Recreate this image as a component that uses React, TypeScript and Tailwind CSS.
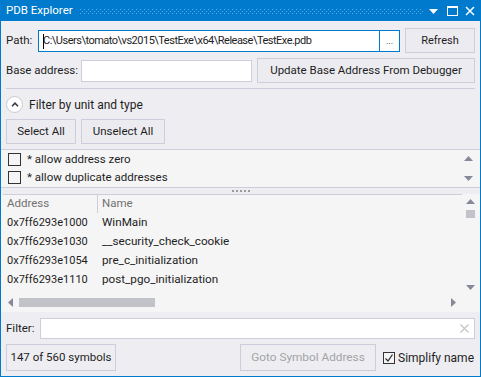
import React from "react";

const rows = [
  ["0x7ff6293e1000", "WinMain"],
  ["0x7ff6293e1030", "__security_check_cookie"],
  ["0x7ff6293e1054", "pre_c_initialization"],
  ["0x7ff6293e1110", "post_pgo_initialization"],
];

function Btn({ children, className = "" }: { children: React.ReactNode; className?: string }) {
  return (
    <div
      className={`flex items-center justify-center border border-[#cccedb] bg-[#ececf0] text-[#1e1e1e] ${className}`}
    >
      {children}
    </div>
  );
}

function TriUp({ color = "#868999" }: { color?: string }) {
  return (
    <svg width="9" height="5" viewBox="0 0 9 5">
      <path d="M0 5 L4.5 0 L9 5 Z" fill={color} />
    </svg>
  );
}
function TriDown({ color = "#868999" }: { color?: string }) {
  return (
    <svg width="9" height="5" viewBox="0 0 9 5">
      <path d="M0 0 L4.5 5 L9 0 Z" fill={color} />
    </svg>
  );
}

export default function App() {
  return (
    <div className="w-[481px] h-[377px] bg-[#007acc] px-px pb-px flex flex-col font-['Roboto',sans-serif] text-[11.5px] leading-none text-[#1e1e1e] whitespace-nowrap">
      {/* title bar */}
      <div className="h-[21px] flex items-center text-white shrink-0">
        <span className="pl-[5px] w-[79px]">PDB Explorer</span>
        <div className="w-[344px] h-[5px] mt-[1px]">
          <svg width="344" height="5">
            <defs>
              <pattern id="dots" width="4" height="4" patternUnits="userSpaceOnUse">
                <rect x="0" y="0" width="1" height="1" fill="#5aaee3" />
                <rect x="2" y="2" width="1" height="1" fill="#5aaee3" />
              </pattern>
            </defs>
            <rect width="344" height="5" fill="url(#dots)" />
          </svg>
        </div>
        <div className="flex-1" />
        <svg width="9" height="5" viewBox="0 0 9 5" className="mr-[9px] mt-[1px]">
          <path d="M0 0 L4.5 5 L9 0 Z" fill="#fff" />
        </svg>
        <svg width="11" height="10" viewBox="0 0 11 10" className="mr-[7px]">
          <rect x="0.5" y="0.5" width="10" height="9" fill="none" stroke="#fff" strokeWidth="1" />
          <rect x="0" y="0" width="11" height="2" fill="#fff" />
        </svg>
        <svg width="10" height="10" viewBox="0 0 10 10" className="mr-[5px]">
          <path d="M1 1 L9 9 M9 1 L1 9" stroke="#fff" strokeWidth="1.5" />
        </svg>
      </div>

      {/* content */}
      <div className="flex-1 bg-[#eeeef2] flex flex-col">
        <div className="px-[5px] pt-[7px] flex flex-col">
          {/* path row */}
          <div className="h-[25px] flex items-center">
            <div className="w-[32px]">Path:</div>
            <div className="flex-1 h-[22px] border border-[#007acc] bg-white flex items-stretch">
              <div className="flex-1 flex items-center pl-[4px] relative overflow-hidden text-[11px] tracking-[-0.5px]">
                <span className="absolute left-[4px] top-[3px] w-px h-[15px] bg-black" />
                C:\Users\tomato\vs2015\TestExe\x64\Release\TestExe.pdb
              </div>
              <div className="w-[20px] border-l border-[#007acc] flex items-end justify-center pb-[5px] text-[9px]">
                ...
              </div>
            </div>
            <Btn className="ml-[5px] w-[70px] h-[25px] text-[11px]">Refresh</Btn>
          </div>
          {/* base address row */}
          <div className="h-[25px] mt-[5px] flex items-center">
            <div className="w-[75px]">Base address:</div>
            <div className="w-[171px] h-[22px] border border-[#cccedb] bg-white" />
            <Btn className="ml-[5px] flex-1 h-[25px]">Update Base Address From Debugger</Btn>
          </div>
          <div className="h-px bg-[#cccedb] mt-[5px]" />
          {/* expander */}
          <div className="h-[15px] mt-[8px] flex items-center">
            <div className="w-[17px] h-[17px] rounded-full border border-[#c9c9cf] bg-white flex items-center justify-center">
              <svg width="8" height="5" viewBox="0 0 8 5">
                <path d="M1 4.2 L4 1.2 L7 4.2" fill="none" stroke="#3a3a3a" strokeWidth="1.6" />
              </svg>
            </div>
            <span className="ml-[6px] text-[12px]">Filter by unit and type</span>
          </div>
          {/* select buttons */}
          <div className="h-[25px] mt-[7px] flex">
            <Btn className="w-[70px] h-[25px]">Select All</Btn>
            <Btn className="ml-[5px] w-[84px] h-[25px]">Unselect All</Btn>
          </div>
        </div>

        {/* checkbox panel */}
        <div className="mt-[5px] h-[39px] border-y border-[#cccedb] bg-[#f5f5f5] flex">
          <div className="flex-1 flex flex-col pl-[7px]">
            {["* allow address zero", "* allow duplicate addresses"].map((t) => (
              <div key={t} className="h-[19px] flex items-center">
                <div className="w-[13px] h-[13px] border border-[#333337] bg-[#f5f5f5]" />
                <span className="ml-[6px]">{t}</span>
              </div>
            ))}
          </div>
          <div className="w-[17px] mr-[3px] flex flex-col items-center justify-between pt-[6px] pb-[6px]">
            <TriUp />
            <TriDown />
          </div>
        </div>

        {/* splitter */}
        <div className="h-[6px] bg-[#eeeef2] flex items-center justify-center gap-[2px]">
          {[0, 1, 2, 3, 4].map((i) => (
            <div key={i} className="w-[2px] h-[2px] bg-[#999999]" />
          ))}
        </div>

        {/* list */}
        <div className="h-[118px] bg-[#f5f5f5] flex">
          <div className="flex-1 flex flex-col pl-[2px]">
            <div className="h-[19px] border-t border-[#cccedb] flex text-[#717171]">
              <div className="w-[95px] pl-[4px] flex items-center border-r border-[#cccedb]">Address</div>
              <div className="pl-[4px] flex items-center">Name</div>
            </div>
            <div className="flex-1 flex flex-col">
              {rows.map(([a, n]) => (
                <div key={a} className="h-[19px] flex items-center">
                  <div className="w-[95px] pl-[4px] text-[11px]">{a}</div>
                  <div className="pl-[4px] text-[11.7px]">{n}</div>
                </div>
              ))}
            </div>
            <div className="h-[16px] flex items-center mb-[2px]">
              <svg width="5" height="9" viewBox="0 0 5 9" className="ml-[5px]">
                <path d="M5 0 L0 4.5 L5 9 Z" fill="#868999" />
              </svg>
              <div className="ml-[6px] w-[136px] h-[9px] bg-[#c2c3c9]" />
              <div className="flex-1" />
              <svg width="5" height="9" viewBox="0 0 5 9" className="mr-[6px]">
                <path d="M0 0 L5 4.5 L0 9 Z" fill="#868999" />
              </svg>
            </div>
          </div>
          <div className="w-[17px] mr-px flex flex-col items-center pt-[5px]">
            <TriUp />
            <div className="mt-[6px] w-[9px] h-[8px] bg-[#c2c3c9]" />
            <div className="flex-1" />
            <div className="mb-[22px]">
              <TriDown />
            </div>
          </div>
        </div>

        {/* filter row */}
        <div className="px-[5px] mt-[6px] h-[21px] flex items-center">
          <div className="w-[34px]">Filter:</div>
          <div className="flex-1 h-[21px] border border-[#cccedb] bg-white flex items-center justify-end pr-[5px]">
            <svg width="9" height="9" viewBox="0 0 9 9">
              <path d="M0.5 0.5 L8.5 8.5 M8.5 0.5 L0.5 8.5" stroke="#c2c3c9" strokeWidth="1.1" />
            </svg>
          </div>
        </div>

        {/* bottom row */}
        <div className="px-[5px] mt-[5px] h-[27px] flex items-center">
          <div className="w-[110px] h-[27px] border border-[#cccedb] bg-[#eeeef2] flex items-center justify-center">
            147 of 560 symbols
          </div>
          <div className="flex-1" />
          <div className="w-[136px] h-[27px] border border-[#cccedb] bg-[#eeeef2] text-[#a2a4a5] flex items-center justify-center text-[11.8px]">
            Goto Symbol Address
          </div>
          <div className="ml-[7px] w-[12px] h-[12px] border border-[#333337] bg-[#f5f5f5] flex items-center justify-center">
            <svg width="10" height="10" viewBox="0 0 10 10">
              <path d="M1.5 5.5 L4 8 L8.5 1.5" fill="none" stroke="#333337" strokeWidth="1.3" />
            </svg>
          </div>
          <span className="ml-[3px] w-[77px] text-[12px]">Simplify name</span>
        </div>
      </div>
    </div>
  );
}
